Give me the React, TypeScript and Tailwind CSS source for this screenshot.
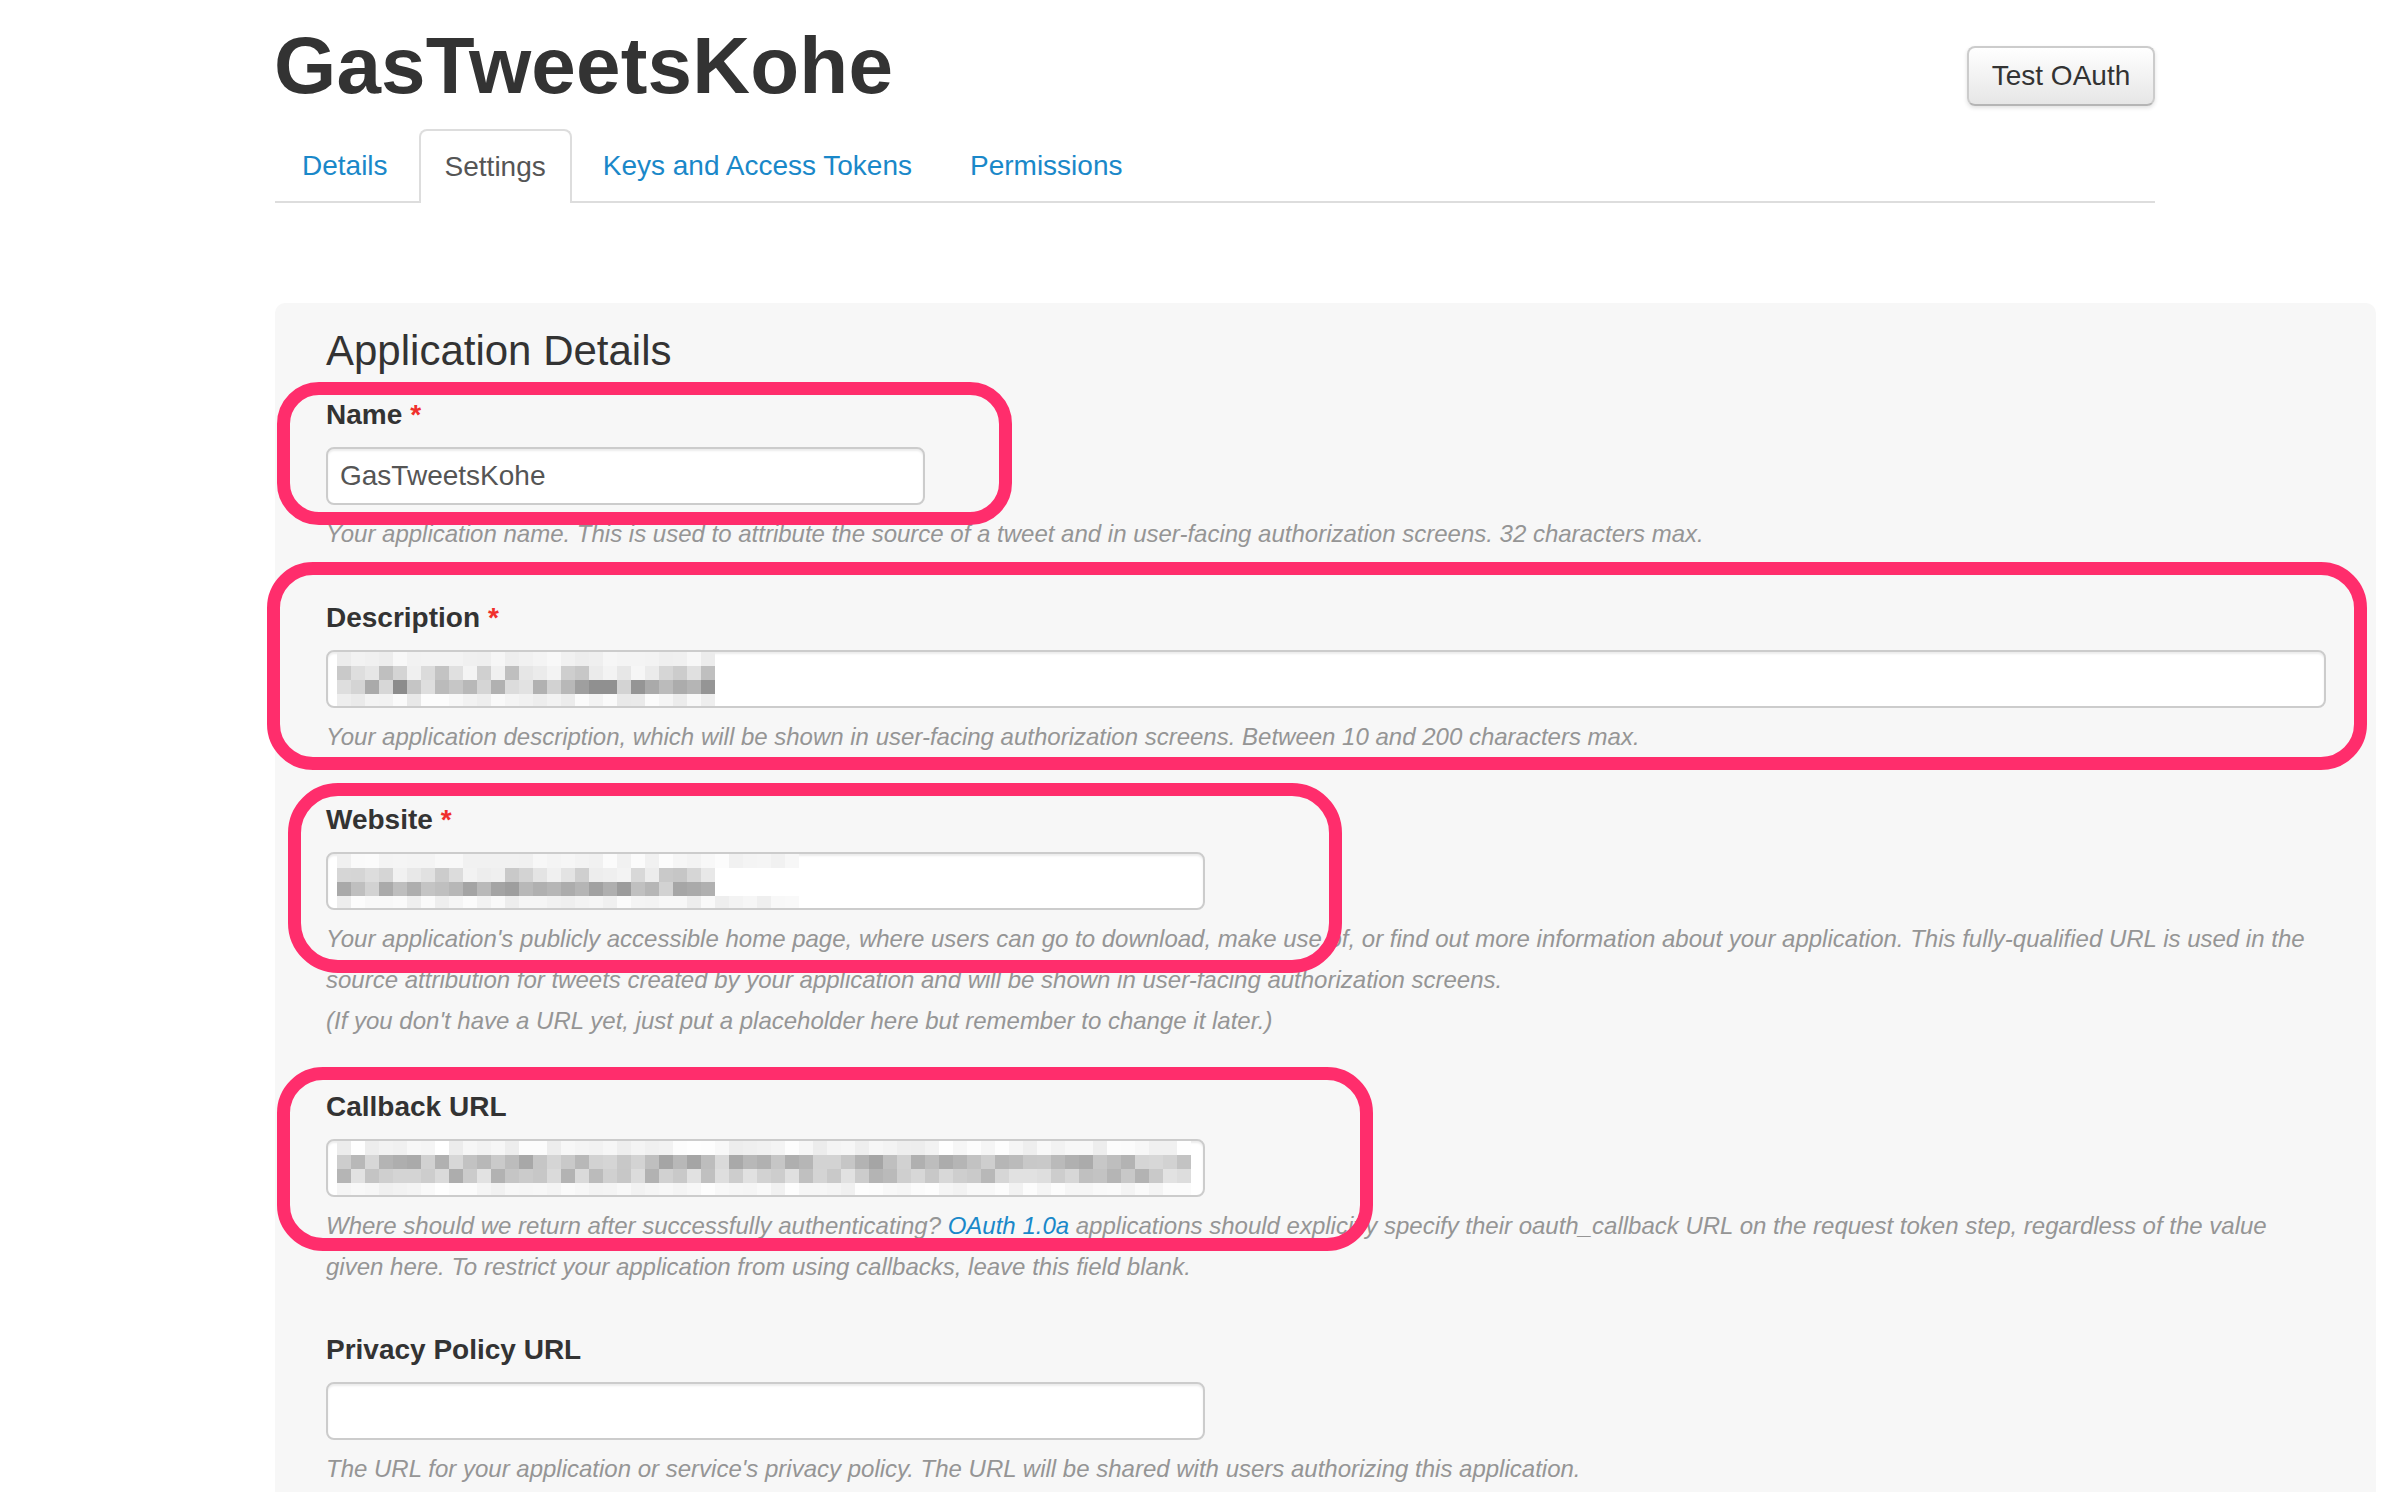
const PINK = "border-[#ff2d6c]";

// seeded random so the pixelated blur looks the same on every run
function makeRng(seed: number) {
  let s = seed;
  return () => {
    s = (s * 16807) % 2147483647;
    return (s - 1) / 2147483646;
  };
}

type MosaicRow = { n: number; min: number; max: number };

const Mosaic = ({ rows, seed }: { rows: MosaicRow[]; seed: number }) => {
  const rand = makeRng(seed);
  const width = Math.max(...rows.map((r) => r.n)) * 14;
  const cells: JSX.Element[] = [];
  rows.forEach((row, ri) => {
    for (let c = 0; c < row.n; c++) {
      const v = Math.round(row.min + rand() * (row.max - row.min));
      cells.push(
        <rect
          key={`${ri}-${c}`}
          x={c * 14}
          y={ri * 14}
          width={14}
          height={14}
          fill={`rgb(${v},${v},${v})`}
        />
      );
    }
  });
  return (
    <svg width={width} height={rows.length * 14} className="block">
      {cells}
    </svg>
  );
};

const Label = ({ text, required }: { text: string; required?: boolean }) => (
  <label className="block text-[28px] font-bold leading-[40px] text-[#333]">
    {text}
    {required && <span className="ml-[8px] text-[#f0302c]">*</span>}
  </label>
);

const Help = ({ children }: { children: React.ReactNode }) => (
  <div className="mt-[8px] text-[24px] italic leading-[41px] text-[#959595]">
    {children}
  </div>
);

const inputBox =
  "mt-[12px] h-[58px] rounded-[8px] border-2 border-[#cccccc] bg-white shadow-[inset_0_2px_2px_rgba(0,0,0,0.075)]";

const Tab = ({ label, active }: { label: string; active?: boolean }) => (
  <li
    className={
      active
        ? "-mb-[2px] mr-[4px] flex h-[74px] items-center rounded-t-[8px] border-2 border-b-0 border-[#dddddd] bg-white px-[24px] text-[#555]"
        : "-mb-[2px] mr-[4px] flex h-[74px] items-center px-[27px] text-[#1a88c9]"
    }
  >
    {label}
  </li>
);

export default function App() {
  return (
    <div className="relative min-h-screen w-full overflow-hidden bg-white pb-[40px] font-['Liberation_Sans',Arial,sans-serif]">
      <div className="ml-[275px] w-[1880px]">
        <div className="flex items-start justify-between pt-[26px]">
          <h1 className="-ml-[1px] text-[80px] font-bold leading-[80px] tracking-[0.2px] text-[#333]">
            GasTweetsKohe
          </h1>
          <button className="mt-[20px] h-[60px] w-[188px] rounded-[8px] border-2 border-[#cccccc] border-b-[#b5b5b5] bg-gradient-to-b from-white to-[#e6e6e6] text-[28px] text-[#333] shadow-[0_2px_4px_rgba(0,0,0,0.12)]">
            Test OAuth
          </button>
        </div>
        <ul className="mt-[23px] flex border-b-2 border-[#dddddd] text-[28px]">
          <Tab label="Details" />
          <Tab label="Settings" active />
          <Tab label="Keys and Access Tokens" />
          <Tab label="Permissions" />
        </ul>
      </div>

      <div className="ml-[275px] mt-[100px] w-[2101px] rounded-[10px] bg-[#f7f7f7] pb-[40px] pl-[51px] pr-[50px] pt-[25px]">
        <h2 className="text-[42px] font-normal leading-[46px] text-[#333]">
          Application Details
        </h2>

        <div className="mt-[21px]">
          <Label text="Name" required />
          <div className={`${inputBox} flex w-[599px] items-center pl-[12px] text-[28px] text-[#555]`}>
            GasTweetsKohe
          </div>
          <Help>
            Your application name. This is used to attribute the source of a tweet and in
            user-facing authorization screens. 32 characters max.
          </Help>
        </div>

        <div className="mt-[44px]">
          <Label text="Description" required />
          <div className={`${inputBox} w-[2000px] overflow-hidden pl-[9px]`}>
            <Mosaic
              seed={11}
              rows={[
                { n: 27, min: 236, max: 250 },
                { n: 27, min: 190, max: 246 },
                { n: 27, min: 140, max: 226 },
                { n: 27, min: 230, max: 252 },
              ]}
            />
          </div>
          <Help>
            Your application description, which will be shown in user-facing authorization
            screens. Between 10 and 200 characters max.
          </Help>
        </div>

        <div className="mt-[43px]">
          <Label text="Website" required />
          <div className={`${inputBox} w-[879px] overflow-hidden pl-[9px]`}>
            <Mosaic
              seed={29}
              rows={[
                { n: 33, min: 240, max: 252 },
                { n: 27, min: 196, max: 244 },
                { n: 27, min: 156, max: 212 },
                { n: 33, min: 236, max: 252 },
              ]}
            />
          </div>
          <Help>
            <span className="block whitespace-nowrap">
              Your application's publicly accessible home page, where users can go to download,
              make use of, or find out more information about your application. This
              fully-qualified URL is used in the
            </span>
            <span className="block whitespace-nowrap">
              source attribution for tweets created by your application and will be shown in
              user-facing authorization screens.
            </span>
            <span className="block whitespace-nowrap">
              (If you don't have a URL yet, just put a placeholder here but remember to change it
              later.)
            </span>
          </Help>
        </div>

        <div className="mt-[46px]">
          <Label text="Callback URL" />
          <div className={`${inputBox} w-[879px] overflow-hidden pl-[9px]`}>
            <Mosaic
              seed={53}
              rows={[
                { n: 61, min: 236, max: 255 },
                { n: 61, min: 164, max: 220 },
                { n: 61, min: 172, max: 228 },
                { n: 61, min: 240, max: 254 },
              ]}
            />
          </div>
          <Help>
            <span className="block whitespace-nowrap">
              Where should we return after successfully authenticating?{" "}
              <span className="text-[#1a88c9]">OAuth 1.0a</span> applications should explicitly
              specify their oauth_callback URL on the request token step, regardless of the value
            </span>
            <span className="block whitespace-nowrap">
              given here. To restrict your application from using callbacks, leave this field
              blank.
            </span>
          </Help>
        </div>

        <div className="mt-[43px]">
          <Label text="Privacy Policy URL" />
          <div className={`${inputBox} w-[879px]`} />
          <Help>
            The URL for your application or service's privacy policy. The URL will be shared
            with users authorizing this application.
          </Help>
        </div>
      </div>

      {/* annotation frames drawn over the form */}
      <div className={`pointer-events-none absolute left-[277px] top-[382px] h-[143px] w-[735px] rounded-[42px] border-[13px] ${PINK}`} />
      <div className={`pointer-events-none absolute left-[267px] top-[562px] h-[208px] w-[2100px] rounded-[46px] border-[13px] ${PINK}`} />
      <div className={`pointer-events-none absolute left-[288px] top-[783px] h-[190px] w-[1054px] rounded-[50px] border-[13px] ${PINK}`} />
      <div className={`pointer-events-none absolute left-[277px] top-[1067px] h-[184px] w-[1096px] rounded-[46px] border-[13px] ${PINK}`} />
    </div>
  );
}
